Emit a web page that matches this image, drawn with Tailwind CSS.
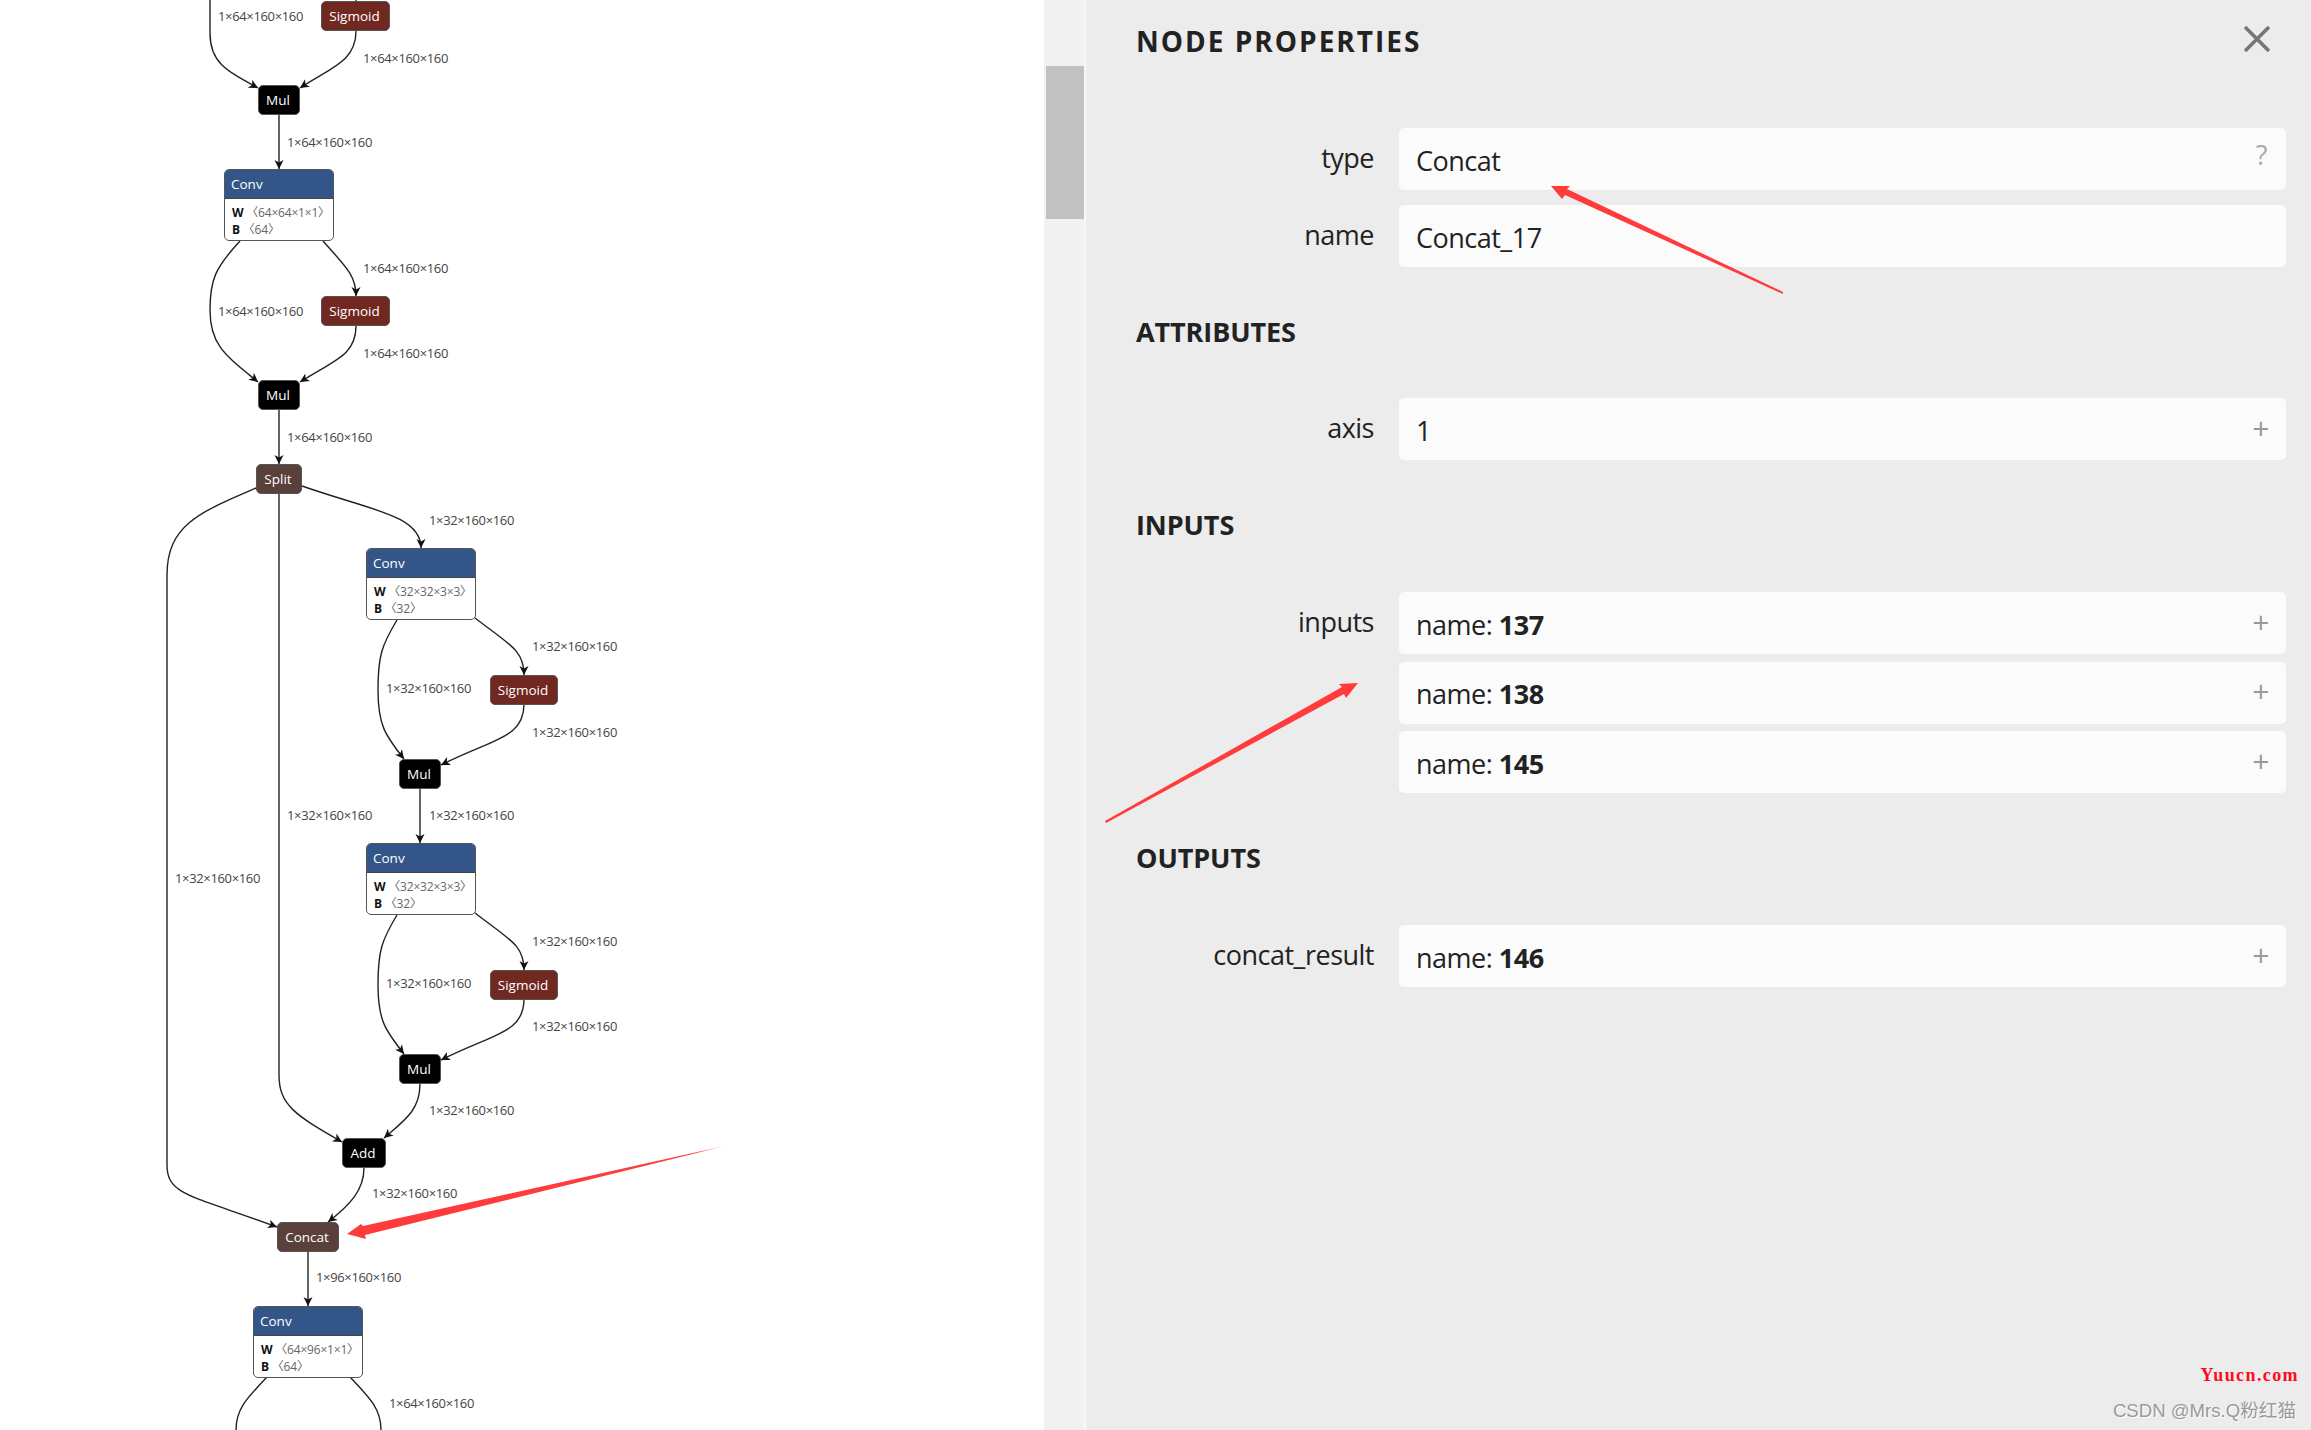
<!DOCTYPE html>
<html lang="en">
<head>
  <meta charset="UTF-8">
  <title>Node properties</title>
  <script src="https://cdn.jsdelivr.net/npm/@tailwindcss/browser@4"></script>
</head>
<body class="bg-white overflow-hidden">
  <div class="relative flex w-[2311px] h-[1430px] overflow-hidden font-['Open_Sans','Noto_Sans_CJK_SC',sans-serif]">

    <!-- graph canvas -->
    <div class="relative w-[1044px] h-full bg-white shrink-0">
      <svg class="absolute inset-0" width="1044" height="1430" fill="none" stroke="#222" stroke-width="1.4">
        <defs>
          <marker id="arrow" markerUnits="userSpaceOnUse" markerWidth="10" markerHeight="10" refX="9" refY="5" orient="auto">
            <path d="M0 0.5 L9 5 L0 9.5 L2.5 5 Z" fill="#111" stroke="none"></path>
          </marker>
        </defs>
        <path marker-end="url(#arrow)" d="M210 0 L210 33 C210 62 225 70 258 88"></path>
        <path marker-end="url(#arrow)" d="M356 31 C356 62 330 68 300 88"></path>
        <path marker-end="url(#arrow)" d="M279 115 L279 169"></path>
        <path marker-end="url(#arrow)" d="M240 241 C215 268 210 280 210 310 C210 345 225 355 258 382"></path>
        <path marker-end="url(#arrow)" d="M323 241 C345 266 356 275 356 296"></path>
        <path marker-end="url(#arrow)" d="M356 326 C356 355 335 360 300 382"></path>
        <path marker-end="url(#arrow)" d="M279 410 L279 464"></path>
        <path marker-end="url(#arrow)" d="M256 488 C200 512 167 525 167 575 L167 1165 C167 1195 190 1195 277 1227"></path>
        <path marker-end="url(#arrow)" d="M279 494 L279 1075 C279 1105 295 1115 342 1142"></path>
        <path marker-end="url(#arrow)" d="M302 486 C370 510 421 515 421 548"></path>
        <path marker-end="url(#arrow)" d="M397 620 C382 645 378 655 378 690 C378 725 385 735 404 759"></path>
        <path marker-end="url(#arrow)" d="M475 618 C510 645 524 650 524 675"></path>
        <path marker-end="url(#arrow)" d="M524 704 C524 738 495 738 441 765"></path>
        <path marker-end="url(#arrow)" d="M420 789 L420 843"></path>
        <path marker-end="url(#arrow)" d="M397 915 C382 940 378 950 378 985 C378 1020 385 1030 404 1054"></path>
        <path marker-end="url(#arrow)" d="M475 913 C510 940 524 945 524 970"></path>
        <path marker-end="url(#arrow)" d="M524 999 C524 1033 495 1033 441 1060"></path>
        <path marker-end="url(#arrow)" d="M420 1084 C420 1110 405 1120 384 1138"></path>
        <path marker-end="url(#arrow)" d="M364 1168 C364 1190 350 1205 328 1222"></path>
        <path marker-end="url(#arrow)" d="M308 1251 L308 1306"></path>
        <path d="M267 1377 C245 1400 236 1410 236 1430"></path>
        <path d="M350 1377 C372 1400 381 1410 381 1430"></path>
        <path d="M356 0 L356 2"></path>
        <g class="text-[13px] tracking-[-0.35px]" fill="#444" stroke="none" dominant-baseline="central">
          <text x="218" y="16">1×64×160×160</text>
          <text x="363" y="58">1×64×160×160</text>
          <text x="287" y="142">1×64×160×160</text>
          <text x="363" y="268">1×64×160×160</text>
          <text x="218" y="311">1×64×160×160</text>
          <text x="363" y="353">1×64×160×160</text>
          <text x="287" y="437">1×64×160×160</text>
          <text x="429" y="520">1×32×160×160</text>
          <text x="532" y="646">1×32×160×160</text>
          <text x="386" y="688">1×32×160×160</text>
          <text x="532" y="732">1×32×160×160</text>
          <text x="287" y="815">1×32×160×160</text>
          <text x="429" y="815">1×32×160×160</text>
          <text x="175" y="878">1×32×160×160</text>
          <text x="532" y="941">1×32×160×160</text>
          <text x="386" y="983">1×32×160×160</text>
          <text x="532" y="1026">1×32×160×160</text>
          <text x="429" y="1110">1×32×160×160</text>
          <text x="372" y="1193">1×32×160×160</text>
          <text x="316" y="1277">1×96×160×160</text>
          <text x="389" y="1403">1×64×160×160</text>
        </g>
      </svg>

      <!-- nodes -->
      <div class="absolute left-[321px] top-[1px] w-[69px] h-[30px] rounded-[5px] border border-[#555] bg-[#702820] text-white text-[13.5px] flex items-center justify-center pr-[2px]">Sigmoid</div>
      <div class="absolute left-[258px] top-[85px] w-[42px] h-[30px] rounded-[5px] border border-[#555] bg-black text-white text-[13.5px] flex items-center justify-center pr-[2px]">Mul</div>

      <div class="absolute left-[224px] top-[169px] w-[110px] h-[72px] rounded-[5px] border border-[#555] bg-white overflow-hidden flex flex-col">
        <div class="h-[29px] bg-[#335588] border-b border-[#444] text-white text-[13.5px] leading-[29px] pl-[6px]">Conv</div>
        <div class="pl-[7px] pt-[5px] text-[12px] tracking-[-0.2px] leading-[17px] text-[#666]"><div class="whitespace-nowrap"><b class="text-[#111]">W</b> 〈64×64×1×1〉</div><div class="whitespace-nowrap"><b class="text-[#111]">B</b> 〈64〉</div></div>
      </div>

      <div class="absolute left-[321px] top-[296px] w-[69px] h-[30px] rounded-[5px] border border-[#555] bg-[#702820] text-white text-[13.5px] flex items-center justify-center pr-[2px]">Sigmoid</div>
      <div class="absolute left-[258px] top-[380px] w-[42px] h-[30px] rounded-[5px] border border-[#555] bg-black text-white text-[13.5px] flex items-center justify-center pr-[2px]">Mul</div>
      <div class="absolute left-[256px] top-[464px] w-[46px] h-[30px] rounded-[5px] border border-[#555] bg-[#5a403a] text-white text-[13.5px] flex items-center justify-center pr-[2px]">Split</div>

      <div class="absolute left-[366px] top-[548px] w-[110px] h-[72px] rounded-[5px] border border-[#555] bg-white overflow-hidden flex flex-col">
        <div class="h-[29px] bg-[#335588] border-b border-[#444] text-white text-[13.5px] leading-[29px] pl-[6px]">Conv</div>
        <div class="pl-[7px] pt-[5px] text-[12px] tracking-[-0.2px] leading-[17px] text-[#666]"><div class="whitespace-nowrap"><b class="text-[#111]">W</b> 〈32×32×3×3〉</div><div class="whitespace-nowrap"><b class="text-[#111]">B</b> 〈32〉</div></div>
      </div>
      <div class="absolute left-[490px] top-[675px] w-[68px] h-[30px] rounded-[5px] border border-[#555] bg-[#702820] text-white text-[13.5px] flex items-center justify-center pr-[2px]">Sigmoid</div>
      <div class="absolute left-[399px] top-[759px] w-[42px] h-[30px] rounded-[5px] border border-[#555] bg-black text-white text-[13.5px] flex items-center justify-center pr-[2px]">Mul</div>

      <div class="absolute left-[366px] top-[843px] w-[110px] h-[72px] rounded-[5px] border border-[#555] bg-white overflow-hidden flex flex-col">
        <div class="h-[29px] bg-[#335588] border-b border-[#444] text-white text-[13.5px] leading-[29px] pl-[6px]">Conv</div>
        <div class="pl-[7px] pt-[5px] text-[12px] tracking-[-0.2px] leading-[17px] text-[#666]"><div class="whitespace-nowrap"><b class="text-[#111]">W</b> 〈32×32×3×3〉</div><div class="whitespace-nowrap"><b class="text-[#111]">B</b> 〈32〉</div></div>
      </div>
      <div class="absolute left-[490px] top-[970px] w-[68px] h-[30px] rounded-[5px] border border-[#555] bg-[#702820] text-white text-[13.5px] flex items-center justify-center pr-[2px]">Sigmoid</div>
      <div class="absolute left-[399px] top-[1054px] w-[42px] h-[30px] rounded-[5px] border border-[#555] bg-black text-white text-[13.5px] flex items-center justify-center pr-[2px]">Mul</div>
      <div class="absolute left-[342px] top-[1138px] w-[44px] h-[30px] rounded-[5px] border border-[#555] bg-black text-white text-[13.5px] flex items-center justify-center pr-[2px]">Add</div>
      <div class="absolute left-[277px] top-[1222px] w-[62px] h-[30px] rounded-[5px] border border-[#555] bg-[#5a403a] text-white text-[13.5px] flex items-center justify-center pr-[2px]">Concat</div>

      <div class="absolute left-[253px] top-[1306px] w-[110px] h-[72px] rounded-[5px] border border-[#555] bg-white overflow-hidden flex flex-col">
        <div class="h-[29px] bg-[#335588] border-b border-[#444] text-white text-[13.5px] leading-[29px] pl-[6px]">Conv</div>
        <div class="pl-[7px] pt-[5px] text-[12px] tracking-[-0.2px] leading-[17px] text-[#666]"><div class="whitespace-nowrap"><b class="text-[#111]">W</b> 〈64×96×1×1〉</div><div class="whitespace-nowrap"><b class="text-[#111]">B</b> 〈64〉</div></div>
      </div>
    </div>

    <!-- scrollbar -->
    <div class="w-[42px] h-full bg-[#f1f1f1] border-r-2 border-[#f8f8f8] pl-[2px] pt-[66px] shrink-0">
      <div class="w-[38px] h-[153px] bg-[#c1c1c1]"></div>
    </div>

    <!-- properties panel -->
    <div class="flex-1 bg-[#ececec] pl-[50px] pr-[25px] text-[#222] text-[27px] tracking-[-0.5px]">
      <div class="h-[128px] flex items-start justify-between">
        <h1 class="mt-[21px] text-[28px] leading-[40px] font-bold tracking-[2px]">NODE PROPERTIES</h1>
        <svg class="mt-[26px] mr-[16px]" width="26" height="26" viewBox="0 0 26 26" stroke="#777" stroke-width="3.6"><path d="M1 1 L25 25 M25 1 L1 25"></path></svg>
      </div>

      <div class="flex">
        <div class="w-[238px] text-right leading-[60px]">type</div>
        <div class="ml-[25px] flex-1 h-[62px] rounded-[5px] bg-[#fbfbfb] flex justify-between pl-[17px] pr-[19px] leading-[65px]"><span>Concat</span><span class="text-[#aaa] text-[27px] leading-[54px]">?</span></div>
      </div>
      <div class="flex mt-[15px]">
        <div class="w-[238px] text-right leading-[60px]">name</div>
        <div class="ml-[25px] flex-1 h-[62px] rounded-[5px] bg-[#fbfbfb] pl-[17px] leading-[65px]">Concat_17</div>
      </div>

      <h2 class="h-[131px] pt-[45px] text-[27px] leading-[40px] font-bold tracking-[-0.1px]">ATTRIBUTES</h2>
      <div class="flex">
        <div class="w-[238px] text-right leading-[60px]">axis</div>
        <div class="ml-[25px] flex-1 h-[62px] rounded-[5px] bg-[#fbfbfb] flex justify-between pl-[17px] pr-[17px] leading-[65px]"><span>1</span><span class="text-[#999] text-[30px] leading-[60px]">+</span></div>
      </div>

      <h2 class="h-[132px] pt-[45px] text-[27px] leading-[40px] font-bold tracking-[-0.1px]">INPUTS</h2>
      <div class="flex">
        <div class="w-[238px] text-right leading-[60px]">inputs</div>
        <div class="ml-[25px] flex-1 flex flex-col">
          <div class="h-[62px] rounded-[5px] bg-[#fbfbfb] flex justify-between pl-[17px] pr-[17px] leading-[65px]"><span>name: <b class="font-bold">137</b></span><span class="text-[#999] text-[30px] leading-[60px]">+</span></div>
          <div class="h-[62px] mt-[8px] rounded-[5px] bg-[#fbfbfb] flex justify-between pl-[17px] pr-[17px] leading-[63px]"><span>name: <b class="font-bold">138</b></span><span class="text-[#999] text-[30px] leading-[58px]">+</span></div>
          <div class="h-[62px] mt-[7px] rounded-[5px] bg-[#fbfbfb] flex justify-between pl-[17px] pr-[17px] leading-[65px]"><span>name: <b class="font-bold">145</b></span><span class="text-[#999] text-[30px] leading-[60px]">+</span></div>
        </div>
      </div>

      <h2 class="h-[132px] pt-[45px] text-[27px] leading-[40px] font-bold tracking-[-0.1px]">OUTPUTS</h2>
      <div class="flex">
        <div class="w-[238px] text-right leading-[60px]">concat_result</div>
        <div class="ml-[25px] flex-1 h-[62px] rounded-[5px] bg-[#fbfbfb] flex justify-between pl-[17px] pr-[17px] leading-[65px]"><span>name: <b class="font-bold">146</b></span><span class="text-[#999] text-[30px] leading-[60px]">+</span></div>
      </div>
    </div>

    <!-- red annotation arrows -->
    <svg class="absolute inset-0 pointer-events-none" width="2311" height="1430">
      <defs>
        <linearGradient id="fade1" gradientUnits="userSpaceOnUse" x1="729" y1="1145" x2="700" y2="1151">
          <stop offset="0" stop-color="#ff3b3b" stop-opacity="0"></stop>
          <stop offset="1" stop-color="#ff3b3b"></stop>
        </linearGradient>
      </defs>
      <polygon fill="url(#fade1)" points="729,1145 363,1226 361,1224 347,1234 366,1239 365,1235"></polygon>
      <polygon fill="#ff3b3b" points="1551,186 1570,186 1567,189 1783,292 1783,294 1565,195 1562,199"></polygon>
      <polygon fill="#ff3b3b" points="1358,683 1339,684 1342,687 1105,821 1106,823 1344,694 1346,698"></polygon>
    </svg>

    <!-- watermarks -->
    <div class="absolute right-[12px] top-[1363px] font-['Liberation_Serif',serif] font-bold text-[18px] leading-[24px] tracking-[1.4px] text-[#ff0a1e]">Yuucn.com</div>
    <div class="absolute right-[15px] top-[1398px] font-['Liberation_Sans','Noto_Sans_CJK_SC',sans-serif] text-[18.6px] leading-[26px] text-[#9a9a9a] [text-shadow:1px_1px_1px_#fff]">CSDN @Mrs.Q粉红猫</div>
  </div>
</body>
</html>
